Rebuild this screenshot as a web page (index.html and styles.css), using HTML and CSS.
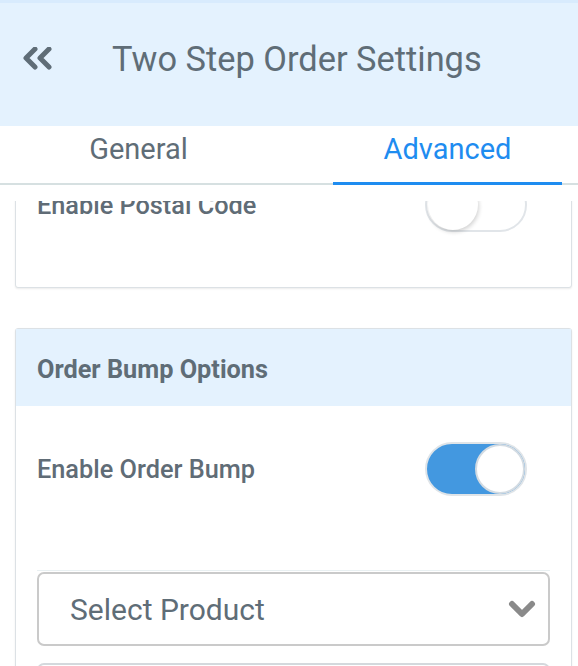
FILE: index.html
```html
<!DOCTYPE html>
<html>
<head>
<meta charset="utf-8">
<link rel="stylesheet" href="styles.css">
</head>
<body>
<div class="app">
  <header class="topbar">
    <svg class="back" width="32" height="24" viewBox="0 0 32 24">
      <polyline points="12,2 3,11 12,20" />
      <polyline points="26,2 17,11 26,20" />
    </svg>
    <h1 class="title">Two Step Order Settings</h1>
  </header>
  <nav class="tabs">
    <div class="tab">General</div>
    <div class="tab active">Advanced</div>
  </nav>
  <main class="scroll">
    <div class="scroll-inner">
      <section class="card">
        <div class="card-body">
          <div class="row">
            <span class="label">Enable Postal Code</span>
            <span class="switch"><span class="knob"></span></span>
          </div>
        </div>
      </section>
      <section class="card">
        <div class="card-head">Order Bump Options</div>
        <div class="card-body body-bump">
          <div class="row">
            <span class="label">Enable Order Bump</span>
            <span class="switch on"><span class="knob"></span></span>
          </div>
          <div class="sep"></div>
          <div class="select">
            <span>Select Product</span>
            <svg class="caret" width="28" height="20" viewBox="0 0 28 20">
              <polyline points="4,5 14,15 24,5" />
            </svg>
          </div>
          <div class="select next"></div>
        </div>
      </section>
    </div>
  </main>
</div>
</body>
</html>
```

FILE: styles.css
```css
* { box-sizing: border-box; }
html, body { margin: 0; padding: 0; background: #fff; }
body { font-family: Roboto, "Noto Sans", sans-serif; color: #5f6d77; }
.app { width: 578px; height: 666px; overflow: hidden; display: flex; flex-direction: column; }

.topbar {
  height: 126px;
  border-top: 3px solid #d8ebfd;
  background: #e4f2fe;
  display: flex;
  align-items: center;
  padding: 0 0 12px 23px;
  flex-shrink: 0;
}
.back { fill: none; stroke: #5f6d77; stroke-width: 5; stroke-linecap: round; stroke-linejoin: round; }
.title { margin: 0 0 0 57px; font-size: 34.4px; font-weight: 400; color: #5f6d77; letter-spacing: 0; }

.tabs {
  height: 59px;
  flex-shrink: 0;
  display: flex;
  justify-content: space-between;
  padding: 0 16px 0 24px;
  border-bottom: 2px solid #d6e0e1;
  background: #fff;
}
.tab {
  width: 229px;
  display: flex;
  align-items: center;
  justify-content: center;
  padding-bottom: 11px;
  font-size: 29px;
  color: #5f6d77;
  margin-bottom: -2px;
  border-bottom: 3px solid transparent;
}
.tab.active { color: #1e8cf0; border-bottom-color: #1e8cf0; }

.scroll { flex: 1; margin-top: 16px; overflow: hidden; }
.scroll-inner { margin-top: -60px; display: flex; flex-direction: column; gap: 40px; padding: 0 6px 0 15px; }

.card {
  border: 1px solid #dce1e5;
  border-radius: 3px;
  box-shadow: 0 1px 2px rgba(0,0,0,0.08);
  background: #fff;
}
.card-head {
  height: 77px;
  background: #e4f2fe;
  display: flex;
  align-items: center;
  padding: 3px 21px 0;
  font-size: 25.3px;
  font-weight: 700;
  color: #5f6d77;
}
.card-body { padding: 36px 21px 55px; }
.row { display: flex; align-items: center; justify-content: space-between; padding-right: 23px; height: 54px; }
.label { font-size: 25.3px; font-weight: 500; color: #606c76; }

.switch {
  width: 102px;
  height: 54px;
  border-radius: 27px;
  border: 2px solid #e1e5e9;
  background: #fff;
  display: flex;
  align-items: center;
  padding: 0 1px;
}
.switch .knob {
  width: 50px;
  height: 50px;
  border-radius: 50%;
  background: #fff;
  box-shadow: 1px 2px 4px rgba(0,0,0,0.18);
}
.switch.on { background: #4398e0; border-color: #dfe4e8; justify-content: flex-end; padding: 0; }
.switch.on .knob { border: 2px solid #d3dbe2; box-shadow: none; }

.body-bump { padding-bottom: 40px; }
.sep { height: 1px; background: #e9f0f2; margin-top: 74px; }
.select {
  margin-top: 1px;
  height: 74px;
  border: 2px solid #cacaca;
  border-radius: 7px;
  display: flex;
  align-items: center;
  justify-content: space-between;
  padding: 0 12px 0 31px;
  font-size: 30px;
  color: #5f6d77;
}
.caret { fill: none; stroke: #8a8a8a; stroke-width: 6; stroke-linecap: round; stroke-linejoin: round; }
.select.next { margin-top: 17px; border-color: #d4d9dd; }
```
